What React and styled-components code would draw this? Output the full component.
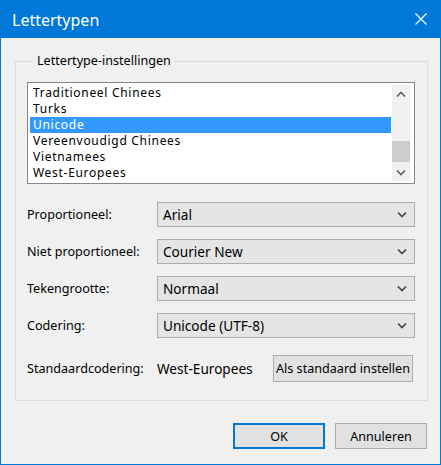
import React from "react";
import styled, { createGlobalStyle } from "styled-components";

const Global = createGlobalStyle`
  html, body {
    margin: 0;
    padding: 0;
    background: #f0f0f0;
  }
  * {
    box-sizing: border-box;
  }
`;

const encodings = [
  "Traditioneel Chinees",
  "Turks",
  "Unicode",
  "Vereenvoudigd Chinees",
  "Vietnamees",
  "West-Europees",
];

const fontRows = [
  { label: "Proportioneel:", value: "Arial" },
  { label: "Niet proportioneel:", value: "Courier New" },
  { label: "Tekengrootte:", value: "Normaal" },
  { label: "Codering:", value: "Unicode (UTF-8)" },
];

function Chevron({ up, color = "#606060" }) {
  return (
    <svg width="10" height="6" viewBox="0 0 10 6">
      <path
        d={up ? "M1 5.5 L5 1.5 L9 5.5" : "M1 0.5 L5 4.5 L9 0.5"}
        fill="none"
        stroke={color}
        strokeWidth="1.6"
      />
    </svg>
  );
}

function App() {
  return (
    <Window>
      <Global />
      <TitleBar>
        <Title>Lettertypen</Title>
        <Close>
          <svg width="12" height="12" viewBox="0 0 12 12">
            <path d="M0.5 0.5 L11.5 11.5 M11.5 0.5 L0.5 11.5" stroke="#fff" strokeWidth="1.1" />
          </svg>
        </Close>
      </TitleBar>

      <Body>
        <Group>
          <Legend>Lettertype-instellingen</Legend>

          <ListBox>
            <Items>
              {encodings.map((name) => (
                <Item key={name} selected={name === "Unicode"}>
                  {name}
                </Item>
              ))}
            </Items>
            <ScrollBar>
              <ArrowBtn>
                <Chevron up />
              </ArrowBtn>
              <Track>
                <Thumb />
              </Track>
              <ArrowBtn>
                <Chevron />
              </ArrowBtn>
            </ScrollBar>
          </ListBox>

          <Form>
            {fontRows.map((row) => (
              <React.Fragment key={row.label}>
                <Label>{row.label}</Label>
                <Combo>
                  <span>{row.value}</span>
                  <Chevron color="#444" />
                </Combo>
              </React.Fragment>
            ))}
          </Form>

          <DefaultRow>
            <Label>Standaardcodering:</Label>
            <Value>West-Europees</Value>
            <Button wide>Als standaard instellen</Button>
          </DefaultRow>
        </Group>

        <Footer>
          <Button primary>OK</Button>
          <Button>Annuleren</Button>
        </Footer>
      </Body>
    </Window>
  );
}

const Window = styled.div`
  width: 441px;
  height: 465px;
  border: 1px solid #0078d7;
  border-top: 0;
  display: flex;
  flex-direction: column;
  background: #f0f0f0;
  font-family: "Noto Sans", "Open Sans", sans-serif;
  font-size: 12.6px;
  color: #000;
`;

const TitleBar = styled.div`
  height: 38px;
  background: #0078d7;
  display: flex;
  align-items: center;
  justify-content: space-between;
  padding: 0 14px 0 11px;
  margin: 0 -1px;
`;

const Title = styled.div`
  color: #fff;
  font-size: 16px;
  padding-left: 1px;
  padding-top: 1px;
`;

const Close = styled.div`
  display: flex;
  width: 12px;
  height: 12px;
`;

const Body = styled.div`
  flex: 1;
  padding: 15px 0 0 14px;
  display: flex;
  flex-direction: column;
`;

const Group = styled.fieldset`
  width: 413px;
  margin: 0;
  padding: 0 12px 18px 11px;
  border: 1px solid #dcdcdc;
`;

const Legend = styled.legend`
  margin-left: 7px;
  padding: 0 3px;
  line-height: 16px;
  color: #000;
`;

const ListBox = styled.div`
  margin-top: 13px;
  width: 388px;
  height: 102px;
  border: 1px solid #828790;
  background: #fff;
  padding: 2px 4px 2px 2px;
  display: flex;
  font-size: 12px;
  letter-spacing: 0.7px;
`;

const Items = styled.div`
  flex: 1;
  display: flex;
  flex-direction: column;
`;

const Item = styled.div`
  height: 16px;
  line-height: 16px;
  padding-left: 3px;
  white-space: nowrap;
  background: ${(p) => (p.selected ? "#3399ff" : "transparent")};
  color: ${(p) => (p.selected ? "#fff" : "#000")};
`;

const ScrollBar = styled.div`
  width: 18px;
  margin-left: 1px;
  background: #f0f0f0;
  display: flex;
  flex-direction: column;
`;

const ArrowBtn = styled.div`
  height: 17px;
  display: flex;
  align-items: center;
  justify-content: center;
`;

const Track = styled.div`
  flex: 1;
  display: flex;
  flex-direction: column;
  justify-content: flex-end;
  padding-bottom: 2px;
`;

const Thumb = styled.div`
  height: 21px;
  background: #cdcdcd;
`;

const Form = styled.div`
  margin-top: 18px;
  display: grid;
  grid-template-columns: 130px 258px;
  row-gap: 12px;
  align-items: center;
`;

const Label = styled.div`
  white-space: nowrap;
`;

const Combo = styled.div`
  height: 25px;
  background: #e5e5e5;
  border: 1px solid #acacac;
  display: flex;
  align-items: center;
  justify-content: space-between;
  padding: 0 7px 0 5px;
  font-size: 13.6px;
`;

const DefaultRow = styled.div`
  margin-top: 17px;
  display: grid;
  grid-template-columns: 130px 116px 140px;
  align-items: center;
`;

const Value = styled.div`
  white-space: nowrap;
  font-size: 13.6px;
`;

const Button = styled.button`
  font: inherit;
  color: #000;
  height: ${(p) => (p.wide ? "27px" : "26px")};
  width: ${(p) => (p.wide ? "140px" : "92px")};
  padding: 0;
  background: #e1e1e1;
  border: ${(p) => (p.primary ? "2px solid #0078d7" : "1px solid #adadad")};
  white-space: nowrap;
`;

const Footer = styled.div`
  margin-top: 22px;
  padding-right: 13px;
  display: flex;
  justify-content: flex-end;
  gap: 10px;
`;

export default App;
